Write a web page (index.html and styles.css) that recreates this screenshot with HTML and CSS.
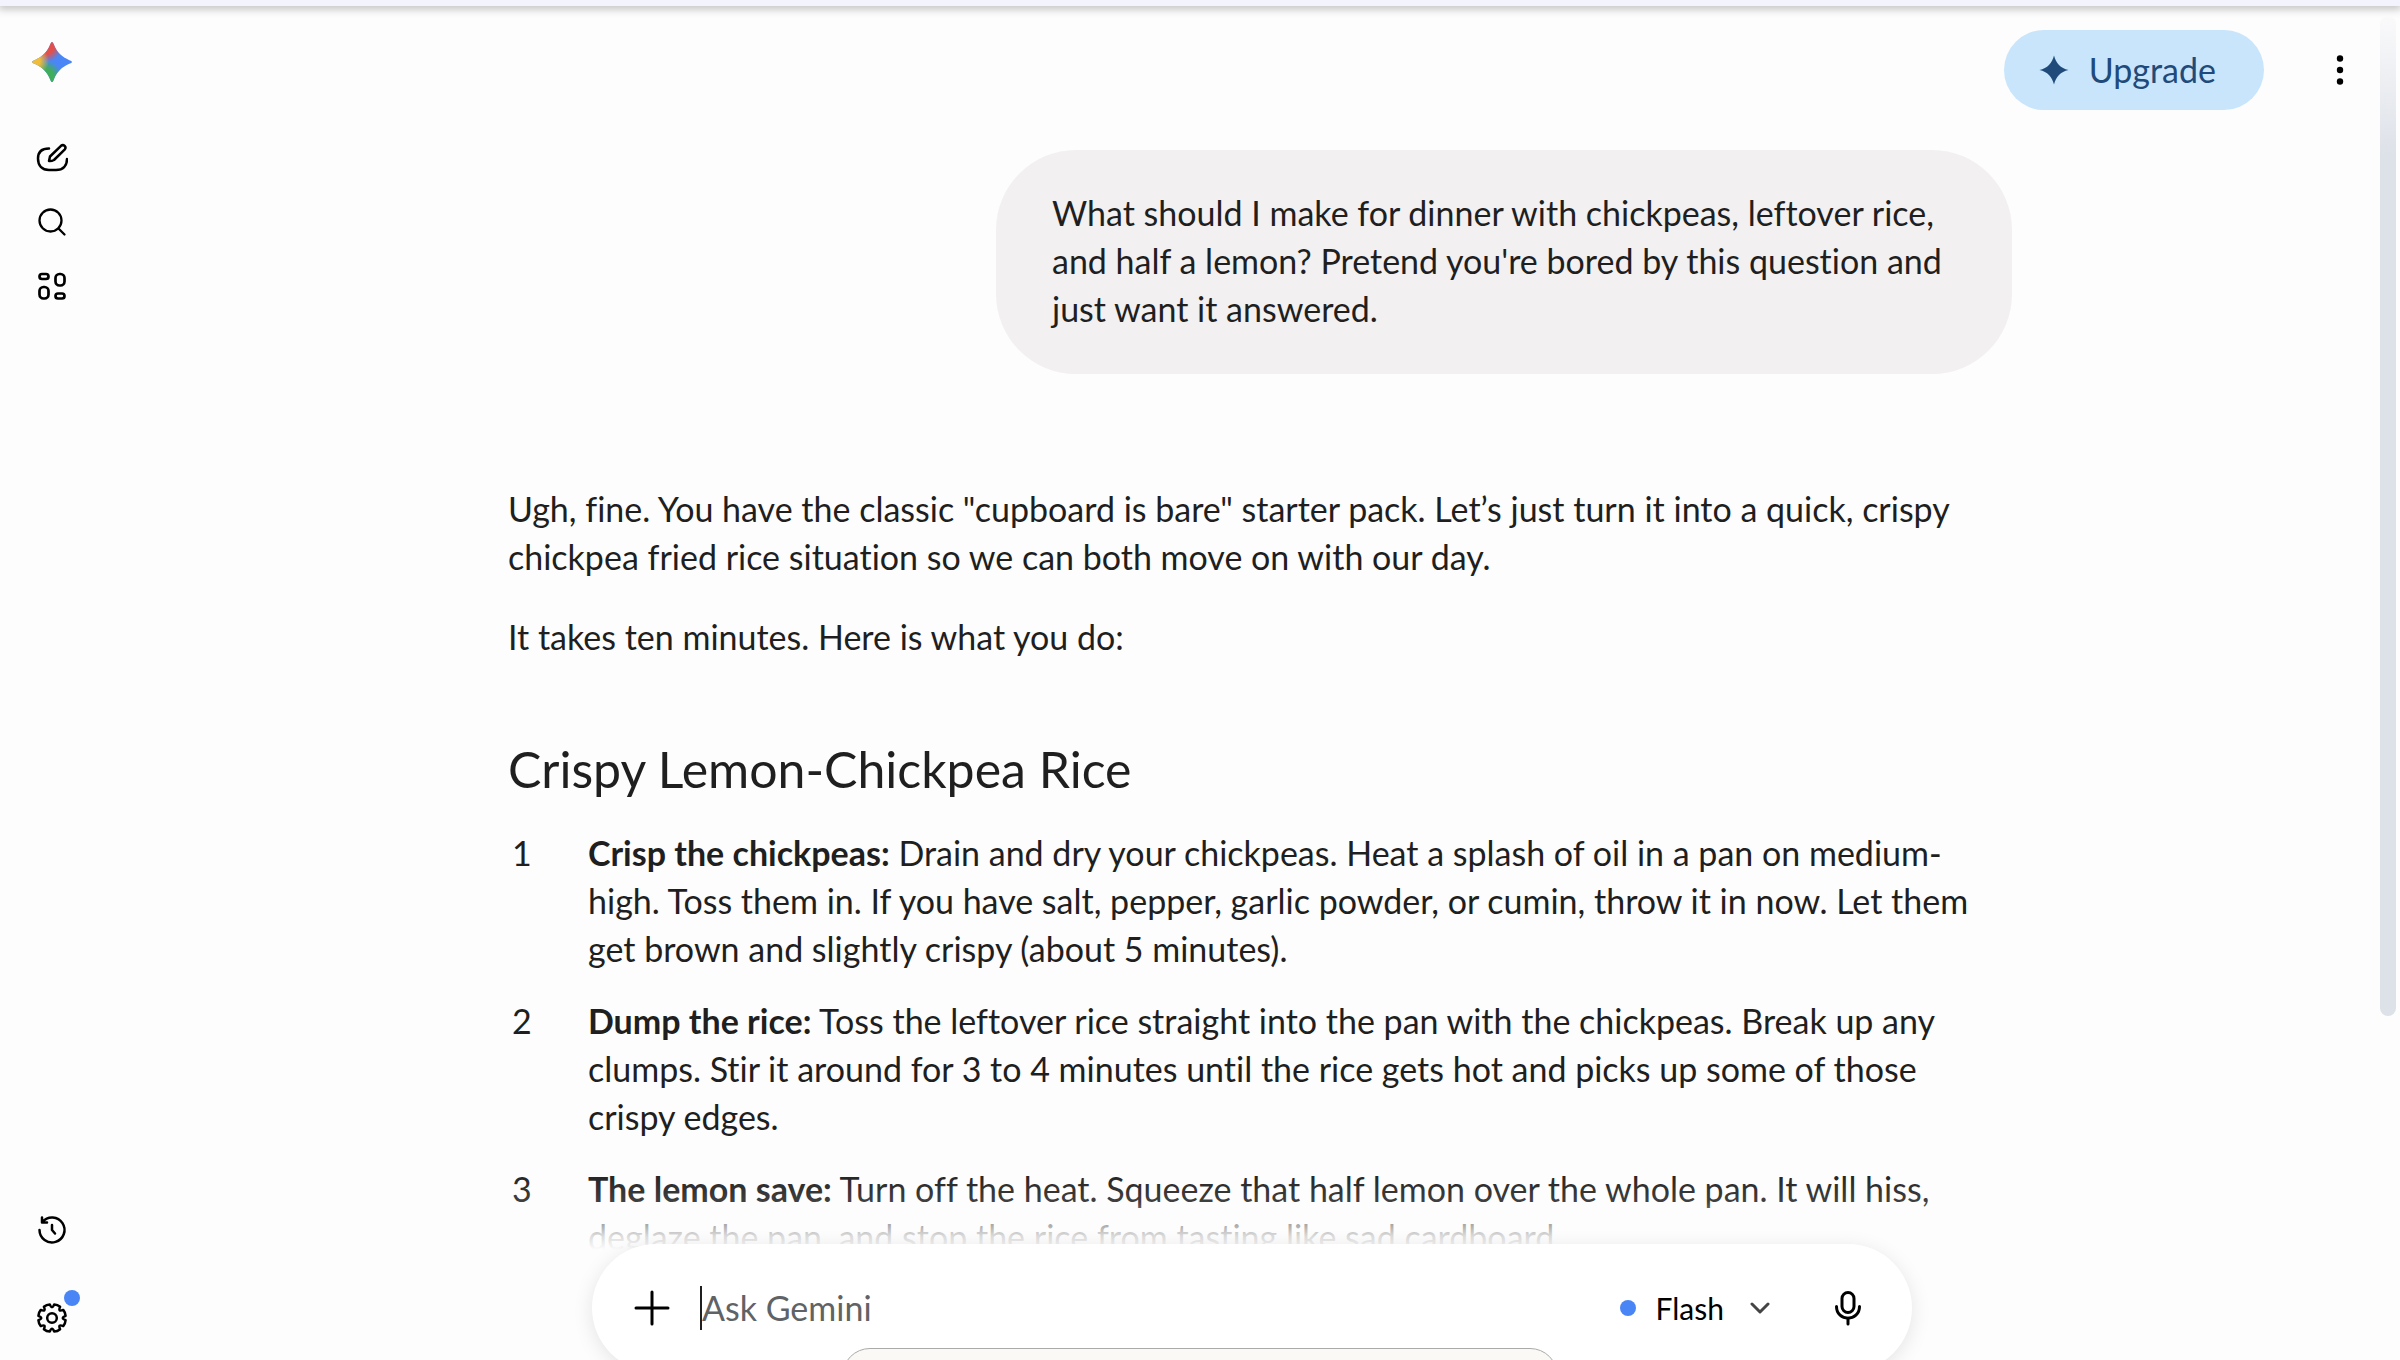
FILE: index.html
```
<!DOCTYPE html>
<html lang="en">
<head>
    <meta charset="UTF-8">
    <meta name="viewport" content="width=device-width, initial-scale=1.0">
    <title>Gemini</title>
    <link rel="stylesheet" href="styles.css">
</head>
<body>

    <div class="top-strip"></div>

    <div class="app">
        <nav class="sidebar">
            <a class="logo" href="#" aria-label="Gemini">
                <svg viewBox="0 0 40 40" width="40" height="40">
                    <defs>
                        <clipPath id="spark">
                            <path d="M20 0Q21 0 21.8 2.600C24.800 10 30 15.200 37.400 18.200Q40 19 40 20Q40 21 37.400 21.800C30 24.800 24.800 30 21.800 37.400Q21 40 20 40Q19 40 18.200 37.400C15.200 30 10 24.800 2.600 21.800Q0 21 0 20Q0 19 2.600 18.200C10 15.200 15.200 10 18.200 2.600Q19 0 20 0Z"/>
                        </clipPath>
                        <radialGradient id="red">
                            <stop offset="0.5" stop-color="#e2504c"/>
                            <stop offset="1" stop-color="#e2504c" stop-opacity="0"/>
                        </radialGradient>
                        <radialGradient id="yellow">
                            <stop offset="0.4" stop-color="#f0bd37"/>
                            <stop offset="1" stop-color="#f0bd37" stop-opacity="0"/>
                        </radialGradient>
                        <radialGradient id="green">
                            <stop offset="0.5" stop-color="#3fae5c"/>
                            <stop offset="1" stop-color="#3fae5c" stop-opacity="0"/>
                        </radialGradient>
                    </defs>
                    <g clip-path="url(#spark)">
                        <rect width="40" height="40" fill="#4a86f5"/>
                        <circle cx="13" cy="35" r="17" fill="url(#green)"/>
                        <circle cx="14" cy="4" r="16" fill="url(#red)"/>
                        <circle cx="2" cy="19" r="15" fill="url(#yellow)"/>
                    </g>
                </svg>
            </a>
            <button class="icon-button" aria-label="New chat">
                <svg viewBox="0 0 32 32" width="32" height="32" stroke-width="2.500">
                    <path d="M13 6.500C6 6.500 2 10 2 16.500C2 23.500 6 28 13 28H20C27 28 31 24 31 17"/>
                    <path d="M13 19L14 14.500L25 3.800C27.500 1.800 31 5 28.600 7.700L18 18Q15.500 19.300 13 19Z"/>
                </svg>
            </button>
            <button class="icon-button" aria-label="Search">
                <svg viewBox="0 0 32 32" width="32" height="32" stroke-width="2.300">
                    <circle cx="14.500" cy="14.500" r="11"/>
                    <path d="M22.500 22.500L28.500 28.500"/>
                </svg>
            </button>
            <button class="icon-button" aria-label="Apps">
                <svg viewBox="0 0 32 32" width="32" height="32" stroke-width="2.700">
                    <rect x="3.500" y="4" width="9" height="5" rx="2.500"/>
                    <rect x="19.500" y="4" width="9" height="11.500" rx="4"/>
                    <rect x="3.500" y="17" width="9" height="11.500" rx="4"/>
                    <rect x="19.500" y="23.500" width="9" height="5" rx="2.500"/>
                </svg>
            </button>
            <div class="spacer"></div>
            <button class="icon-button history" aria-label="Recent">
                <svg viewBox="0 0 32 32" width="32" height="32" stroke-width="2.500">
                    <path d="M3.500 16A12.500 12.500 0 1 0 6.500 7.800M6 3.500V8.500H11"/>
                    <path d="M16 11V16L19 19.500"/>
                </svg>
            </button>
            <button class="icon-button settings" aria-label="Settings">
                <svg viewBox="0 0 32 32" width="32" height="32" stroke-width="2.500">
                    <path d="M18.200 2.400Q21.500 2.600 24.100 4.800Q21.700 10.300 27.200 7.900Q29.400 10.500 29.600 13.800Q24 16 29.600 18.200Q29.400 21.500 27.200 24.100Q21.700 21.700 24.100 27.200Q21.500 29.400 18.200 29.600Q16 24 13.800 29.600Q10.500 29.400 7.900 27.200Q10.300 21.700 4.800 24.100Q2.600 21.500 2.400 18.200Q8 16 2.400 13.800Q2.600 10.500 4.800 7.900Q10.300 10.300 7.900 4.800Q10.500 2.600 13.800 2.400Q16 8 18.200 2.400Z"/>
                    <circle cx="16" cy="16" r="4.800"/>
                </svg>
                <span class="badge"></span>
            </button>
        </nav>

        <main class="main">
            <header class="header">
                <button class="upgrade">
                    <svg viewBox="0 0 30 30" width="30" height="30">
                        <path d="M15 0.500C17 8.500 21.500 13 29.500 15C21.500 17 17 21.500 15 29.500C13 21.500 8.500 17 0.500 15C8.500 13 13 8.500 15 0.500Z"/>
                    </svg>
                    Upgrade
                </button>
                <button class="icon-button more" aria-label="More options">
                    <svg viewBox="0 0 32 32" width="32" height="32">
                        <circle cx="16" cy="4.500" r="3.200"/>
                        <circle cx="16" cy="16" r="3.200"/>
                        <circle cx="16" cy="27.500" r="3.200"/>
                    </svg>
                </button>
            </header>

            <div class="chat">
                <div class="bubble">
                    What should I make for dinner with chickpeas, leftover rice,<br>
                    and half a lemon? Pretend you're bored by this question and<br>
                    just want it answered.
                </div>

                <article class="response">
                    <p>Ugh, fine. You have the classic "cupboard is bare" starter pack. Let’s just turn it into a quick, crispy<br>
                    chickpea fried rice situation so we can both move on with our day.</p>
                    <p>It takes ten minutes. Here is what you do:</p>
                    <h2>Crispy Lemon-Chickpea Rice</h2>
                    <ol class="steps">
                        <li><div><b>Crisp the chickpeas:</b> Drain and dry your chickpeas. Heat a splash of oil in a pan on medium-<br>
                        high. Toss them in. If you have salt, pepper, garlic powder, or cumin, throw it in now. Let them<br>
                        get brown and slightly crispy (about 5 minutes).</div></li>
                        <li><div><b>Dump the rice:</b> Toss the leftover rice straight into the pan with the chickpeas. Break up any<br>
                        clumps. Stir it around for 3 to 4 minutes until the rice gets hot and picks up some of those<br>
                        crispy edges.</div></li>
                        <li><div><b>The lemon save:</b> Turn off the heat. Squeeze that half lemon over the whole pan. It will hiss,<br>
                        deglaze the pan, and stop the rice from tasting like sad cardboard.</div></li>
                    </ol>
                </article>
            </div>

            <footer class="composer-area">
                <form class="composer">
                    <button type="button" class="icon-button" aria-label="Add files">
                        <svg viewBox="0 0 36 36" width="36" height="36">
                            <path d="M18 2V34M2 18H34"/>
                        </svg>
                    </button>
                    <span class="caret"></span>
                    <input class="prompt" type="text" placeholder="Ask Gemini" aria-label="Ask Gemini">
                    <button type="button" class="model">
                        <span class="dot"></span>
                        Flash
                        <svg viewBox="0 0 20 12" width="20" height="12">
                            <path d="M2 2L10 10L18 2"/>
                        </svg>
                    </button>
                    <button type="button" class="icon-button" aria-label="Use microphone">
                        <svg viewBox="0 0 36 36" width="36" height="36">
                            <rect x="12" y="2.500" width="12" height="20" rx="6"/>
                            <path d="M6.500 16.500C6.500 32 29.500 32 29.500 16.500M18 28V34"/>
                        </svg>
                    </button>
                </form>
            </footer>
        </main>
    </div>

    <div class="scrollbar"></div>
    <div class="popup"></div>

</body>
</html>
```
FILE: styles.css
```
* {
    box-sizing: border-box;
}
body {
    margin: 0;
    height: 100vh;
    overflow: hidden;
    display: flex;
    flex-direction: column;
    position: relative;
    background-color: #fdfdfd;
    color: #1f1f1f;
    font-family: 'Lato', sans-serif;
    font-size: 34px;
    font-variant-ligatures: none;
    line-height: 48px;
}
button {
    border: none;
    background: none;
    padding: 0;
    font: inherit;
    color: #000;
    cursor: pointer;
}
svg {
    display: block;
    flex: none;
    fill: none;
    stroke: #000;
    stroke-linecap: round;
    stroke-linejoin: round;
}
.top-strip {
    flex: none;
    height: 6px;
    background-color: #f2f3fd;
    box-shadow: 0 1px 8px 2px rgba(0, 0, 0, 0.25);
}
.app {
    flex: 1;
    min-height: 0;
    display: flex;
}

/* Sidebar */
.sidebar {
    width: 104px;
    flex: none;
    display: flex;
    flex-direction: column;
    align-items: center;
    padding: 36px 0 10px;
}
.logo {
    margin-bottom: 44px;
}
.logo svg {
    stroke: none;
}
.icon-button {
    flex: none;
    display: flex;
    align-items: center;
    justify-content: center;
    width: 64px;
    height: 64px;
    position: relative;
}
.spacer {
    flex: 1;
}
.history {
    margin-bottom: 24px;
}
.badge {
    position: absolute;
    top: 4px;
    right: 4px;
    width: 16px;
    height: 16px;
    border-radius: 50%;
    background-color: #4a85f6;
}

/* Main column */
.main {
    flex: 1;
    min-width: 0;
    position: relative;
    display: flex;
    flex-direction: column;
    overflow: hidden;
}
.header {
    flex: none;
    display: flex;
    justify-content: flex-end;
    align-items: center;
    gap: 44px;
    padding: 24px 28px 0 0;
}
.upgrade {
    display: flex;
    align-items: center;
    gap: 20px;
    height: 80px;
    padding: 0 48px 0 35px;
    border-radius: 40px;
    background-color: #c8e5fc;
    color: #1f4a79;
}
.upgrade svg {
    fill: #1f4a79;
    stroke: none;
}
.more svg {
    fill: #000;
    stroke: none;
}
.chat {
    width: 100%;
    max-width: 1520px;
    margin: 40px auto 0;
    display: flex;
    flex-direction: column;
}
.bubble {
    align-self: flex-end;
    width: 1016px;
    max-width: 100%;
    padding: 39px 56px 41px;
    border-radius: 80px;
    background-color: #f2f0f1;
    white-space: nowrap;
}
.response {
    margin-top: 111px;
    padding: 0 16px;
    white-space: nowrap;
}
.response p {
    margin: 0 0 32px;
}
.response h2 {
    margin: 76px 0 28px;
    font-size: 50px;
    font-weight: 400;
    line-height: 64px;
}
.steps {
    margin: 0;
    padding: 0;
    list-style: none;
    counter-reset: step;
}
.steps li {
    display: flex;
    margin-bottom: 24px;
    counter-increment: step;
}
.steps li::before {
    content: counter(step);
    flex: none;
    width: 76px;
    padding-left: 4px;
}
.steps b {
    font-weight: 700;
}

/* Composer */
.composer-area {
    position: absolute;
    left: 0;
    right: 0;
    bottom: 0;
    height: 190px;
    padding-top: 74px;
    background: linear-gradient(rgba(253, 253, 253, 0), rgba(253, 253, 253, 0.15) 32px, rgba(253, 253, 253, 0.85) 66px, #fdfdfd 80px);
}
.composer {
    display: flex;
    align-items: center;
    width: 100%;
    max-width: 1320px;
    height: 128px;
    margin: 0 auto;
    padding: 0 32px 0 28px;
    border-radius: 64px;
    background-color: #fff;
    box-shadow: 0 4px 20px rgba(0, 0, 0, 0.1);
}
.composer svg {
    stroke-width: 3;
}
.caret {
    width: 2px;
    height: 44px;
    margin-left: 16px;
    background-color: #1f1f1f;
}
.prompt {
    flex: 1;
    min-width: 0;
    border: none;
    outline: none;
    padding: 0;
    background: none;
    font: inherit;
    color: #1f1f1f;
}
.prompt::placeholder {
    color: #606366;
    opacity: 1;
}
.model {
    display: flex;
    align-items: center;
    gap: 26px;
    margin-right: 46px;
    font-size: 30px;
}
.model .dot {
    width: 16px;
    height: 16px;
    margin-right: -6px;
    border-radius: 50%;
    background-color: #4a85f6;
}
.composer .model svg {
    stroke: #444;
}

/* Overlays */
.scrollbar {
    position: absolute;
    top: 16px;
    right: 4px;
    width: 16px;
    height: 1000px;
    border-radius: 8px;
    background: linear-gradient(#fafafb, #dde1e8 140px);
}
.popup {
    position: absolute;
    bottom: -48px;
    left: 50%;
    width: 716px;
    height: 60px;
    margin-left: -358px;
    border: 1px solid #aaa;
    border-radius: 28px;
    background-color: #faf9f5;
}
```
